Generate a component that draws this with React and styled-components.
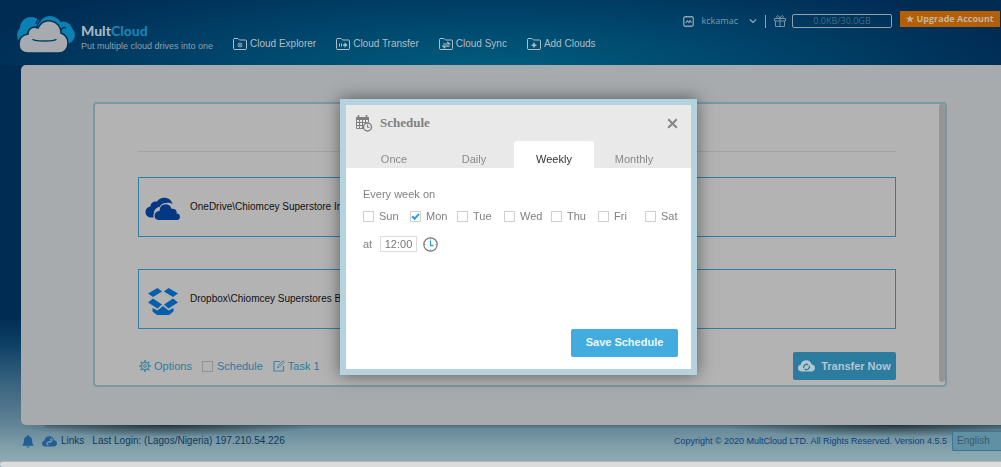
import React, { useState } from "react";
import styled, { createGlobalStyle, css } from "styled-components";

const sans = '"Liberation Sans", Arial, sans-serif';
const humanist = '"Open Sans", "Noto Sans", sans-serif';

const GlobalStyle = createGlobalStyle`
  *, *::before, *::after { box-sizing: border-box; }
  html { overflow: hidden; }
  body { margin: 0; font-family: ${sans}; font-size: 11px; line-height: 14px; }
  button, input, select { font: inherit; margin: 0; }
  a { text-decoration: none; color: inherit; }
  svg { display: block; flex: none; }
`;

const Page = styled.div`
  min-height: 100vh;
  display: flex;
  flex-direction: column;
  overflow: hidden;
  background:
    radial-gradient(ellipse 540px 110px at 49% 75px, #00607f 0%, rgba(0, 82, 120, 0.75) 45%, rgba(0, 43, 83, 0) 100%) no-repeat 0 0 / 100% 65px,
    linear-gradient(#002c54 0, #002c54 68%, #0f4166 74%, #345f7c 81%, #5d8093 90%, #88a6ae 97%, #8eacb3 100%);
`;

const Header = styled.header`
  display: flex;
  align-items: flex-start;
  height: 65px;
  padding: 0 1px 0 17px;
`;

const Brand = styled.a`
  display: flex;
  gap: 5px;
  width: 216px;
  padding-top: 15px;
`;

const BrandText = styled.span`
  display: flex;
  flex-direction: column;
  padding-top: 8px;
  white-space: nowrap;
`;

const BrandName = styled.strong`
  font: 900 14px/16px Lato, sans-serif;
  color: #a9b5bd;
  span { color: #1b83b0; }
`;

const Tagline = styled.span`
  font-size: 9px;
  line-height: 14px;
  color: #8fa0ad;
`;

const Nav = styled.nav`
  display: flex;
  gap: 20px;
  padding-top: 37px;
`;

const NavLink = styled.a`
  display: flex;
  align-items: center;
  gap: 3px;
  font-size: 10px;
  line-height: 14px;
  color: #b3bcc1;
  white-space: nowrap;
`;

const Account = styled.div`
  display: flex;
  align-items: center;
  height: 31px;
  margin-left: auto;
  padding-top: 11px;
  font-family: ${humanist};
  font-size: 9px;
  color: #7f9aab;
`;

const UserButton = styled.button`
  display: flex;
  align-items: center;
  gap: 8px;
  height: 13px;
  padding: 0 8px 0 0;
  border: 0;
  border-right: 1px solid #8ea1ad;
  background: none;
  color: inherit;
  span { padding-right: 3px; }
`;

const GiftLink = styled.a`
  padding: 0 6px 0 8px;
`;

const Storage = styled.div`
  width: 100px;
  height: 14px;
  margin-right: 8px;
  border: 1px solid #8ea1ad;
  border-radius: 2px;
  line-height: 12px;
  text-align: center;
  color: #426a80;
`;

const Upgrade = styled.button`
  align-self: flex-start;
  width: 100px;
  height: 16px;
  padding: 0;
  border: 0;
  background: #b45f03;
  color: #c3b4a2;
  font-weight: 700;
  line-height: 16px;
  white-space: nowrap;
`;

const Card = styled.main`
  flex: 1;
  display: flex;
  margin-left: 21px;
  padding: 37px 54px 38px 72px;
  border-radius: 5px 0 0 5px;
  background: #a7abae;
`;

const Task = styled.section`
  flex: 1;
  display: flex;
  border: 2px solid #7a97a2;
  border-radius: 4px;
  background: #b3b3b3;
`;

const TaskBody = styled.div`
  flex: 1;
  min-width: 0;
  padding: 47px 43px 5px;
  display: flex;
  flex-direction: column;
`;

const Track = styled.div`
  width: 6px;
  margin-bottom: 3px;
  border-radius: 3px;
  background: #959595;
`;

const Rule = styled.hr`
  width: 100%;
  margin: 0 0 25px;
  border: 0;
  border-top: 1px solid #a3a3a3;
`;

const Drive = styled.div`
  display: flex;
  align-items: center;
  height: 60px;
  margin-bottom: ${(p) => (p.$last ? 23 : 32)}px;
  padding-left: 5px;
  border: 1px solid #2f7fa2;
  font-size: 10px;
  color: #111;
`;

const DriveIcon = styled.span`
  display: flex;
  justify-content: center;
  width: 38px;
  margin-right: 8px;
  padding-top: 4px;
`;

const Tools = styled.div`
  display: flex;
  align-items: center;
  height: 28px;
  padding-left: 1px;
  color: #2b7c9f;
`;

const Tool = styled.a`
  display: flex;
  align-items: center;
  gap: 3px;
  margin-right: 10px;
`;

const ToolCheck = styled.label`
  display: flex;
  align-items: center;
  gap: 4px;
  margin-right: 10px;
`;

const Check = styled.input`
  appearance: none;
  width: 11px;
  height: 11px;
  flex: none;
  border: 1px solid ${(p) => (p.$dim ? "#929292" : "#d0d0d0")};
  background: ${(p) => (p.$dim ? "none" : "#fff")};
  &:checked {
    background: #fff
      url("data:image/svg+xml,%3Csvg xmlns='http://www.w3.org/2000/svg' viewBox='0 0 9 9'%3E%3Cpath d='M1.2 4.2L3.6 6.8L8 1.8' fill='none' stroke='%23259fdb' stroke-width='2'/%3E%3C/svg%3E")
      center / 9px 9px no-repeat;
  }
`;

const filled = css`
  border: 0;
  border-radius: 2px;
  font-weight: 700;
  height: 28px;
  white-space: nowrap;
`;

const Transfer = styled.button`
  ${filled}
  display: flex;
  align-items: center;
  justify-content: center;
  gap: 6px;
  width: 103px;
  margin-left: auto;
  padding: 0;
  background: #2c7c9f;
  color: #b4c6ce;
`;

const Footer = styled.footer`
  display: flex;
  align-items: center;
  height: 36px;
  padding: 0 0 4px 22px;
  font-size: 10px;
  color: #12395c;
  background:
    radial-gradient(ellipse 150px 12px at 165px 0, rgba(20, 35, 40, 0.75), rgba(20, 35, 40, 0)) no-repeat,
    radial-gradient(ellipse 170px 12px at calc(100% - 110px) 0, rgba(20, 35, 40, 0.75), rgba(20, 35, 40, 0)) no-repeat,
    linear-gradient(rgba(30, 50, 60, 0.3), rgba(30, 50, 60, 0) 4px) no-repeat 45px 0;
`;

const FooterLink = styled.a`
  display: flex;
  align-items: center;
  gap: 4px;
  margin-right: 8px;
`;

const Copyright = styled.span`
  margin-left: auto;
  margin-right: 5px;
  font-size: 9px;
  color: #0e427c;
`;

const Language = styled.select`
  appearance: none;
  width: 49px;
  height: 20px;
  padding: 0 0 0 4px;
  border: 1px solid #3b7595;
  border-right: 0;
  border-radius: 2px 0 0 2px;
  background: #5f90a3;
  color: #40596a;
`;

const BottomBar = styled.div`
  height: 6px;
  border-top: 1px solid #b9b4b4;
  border-radius: 3px 0 0 3px;
  background: #dcdcdc;
`;

const Overlay = styled.div`
  position: fixed;
  inset: 0;
  display: flex;
  justify-content: center;
  align-items: flex-start;
  padding: 99px 0 0 36px;
`;

const Dialog = styled.form`
  display: flex;
  flex-direction: column;
  width: 357px;
  height: 276px;
  border: 6px solid #b5d2df;
  background: #fff;
  color: #808080;
  box-shadow: 0 0 16px rgba(0, 0, 0, 0.5);
`;

const DialogHead = styled.div`
  display: flex;
  align-items: center;
  gap: 7px;
  height: 36px;
  padding: 0 13px 0 9px;
  background: #e9e9e9;
`;

const Title = styled.h2`
  margin: 0;
  font: 700 13px/16px "Liberation Serif", serif;
  color: #808080;
`;

const Close = styled.button`
  margin-left: auto;
  padding: 0;
  border: 0;
  background: none;
  color: #858585;
`;

const Tabs = styled.div`
  display: flex;
  height: 27px;
  padding-left: 8px;
  background: #e9e9e9;
`;

const Tab = styled.button`
  width: 80px;
  padding: 9px 0 0;
  border: 0;
  border-radius: 3px 3px 0 0;
  background: ${(p) => (p.$active ? "#fff" : "transparent")};
  color: ${(p) => (p.$active ? "#333" : "#8a8a8a")};
`;

const DialogBody = styled.div`
  flex: 1;
  display: flex;
  flex-direction: column;
  padding: 19px 0 12px 17px;
`;

const Days = styled.fieldset`
  margin: 0;
  padding: 0;
  border: 0;
  legend { padding: 0; margin-bottom: 8px; }
`;

const DayList = styled.div`
  display: grid;
  grid-template-columns: repeat(7, 47px);
`;

const Day = styled.label`
  display: flex;
  align-items: center;
  gap: 5px;
`;

const TimeRow = styled.div`
  display: flex;
  align-items: center;
  margin-top: 13px;
  label { width: 17px; }
  input {
    width: 37px;
    height: 16px;
    padding: 0;
    margin-right: 6px;
    border: 1px solid #dcdcdc;
    text-align: center;
    color: #777;
    background: #fff;
  }
`;

const Save = styled.button`
  ${filled}
  width: 107px;
  margin: auto 13px 0 auto;
  padding: 0 0 2px;
  background: #41acdd;
  color: #eef8fd;
`;

const BrandIcon = () => (
  <svg width="59" height="39" viewBox="0 0 59 39">
    <g fill="#0b80b2">
      <circle cx="14" cy="13" r="11" />
      <circle cx="10" cy="20" r="10" />
      <circle cx="33" cy="13" r="12" />
      <circle cx="46" cy="16" r="9.5" />
      <circle cx="49" cy="20" r="9" />
    </g>
    <path d="M20 12c0-3 2-5 4-7M24 3c-3 1-5 4-5 6M44 15c1-2 3-3 5-2" fill="none" stroke="#062f56" strokeWidth="1.300" />
    <path d="M11 38C5 38 2 34 2 29c0-5 3-9 9-10 0-5 4-8 10-6 3-6 8-8 13-7 6 1 10 6 10 12 5 2 7 6 7 10 0 6-4 10-9 10Z" fill="#a7abb0" stroke="#062f56" strokeWidth="1.5" />
    <path d="M16 24.500c2 2 21 2 23 0" fill="none" stroke="#063c64" strokeWidth="1.3" strokeLinecap="round" />
  </svg>
);

const glyphs = {
  explore: (
    <g>
      <path d="M7 4.500v5M4.500 7h5M5.200 5.200l3.600 3.600M8.800 5.200L5.200 8.800" stroke="currentColor" strokeWidth="1" />
      <circle cx="7" cy="7" r="0.800" fill="#005078" />
    </g>
  ),
  transfer: <path d="M3 5.500h1v3H3zM5 5.500h1v3H5zM7 6.200h1.500V4.200L11.500 7 8.500 9.800V7.800H7z" fill="currentColor" />,
  sync: <path d="M4 6h6.500L8.300 4M10.500 8.200H4l2.200 2" fill="none" stroke="currentColor" strokeWidth="1.200" />,
  add: <path d="M7 4.800v4.800M4.600 7.200h4.800" stroke="currentColor" strokeWidth="1.600" />,
};

const FolderIcon = ({ kind }) => (
  <svg width="14" height="12" viewBox="0 0 14 12">
    <path d="M.5 10.500v-9l.5-1h4l1.500 1.500h6.500l.5.500v8l-.5 1H1z" fill="none" stroke="currentColor" strokeWidth="1" />
    {glyphs[kind]}
  </svg>
);

const AvatarIcon = () => (
  <svg width="11" height="11" viewBox="0 0 11 11" fill="none" stroke="#8ea1ad">
    <rect x=".75" y=".75" width="9.500" height="9.500" rx="1.500" strokeWidth="1.300" />
    <path d="M2.500 6.800l2-2 1.500 1.700 1-2 1.500 2.300" strokeWidth="1.100" />
  </svg>
);

const ChevronIcon = () => (
  <svg width="8" height="6" viewBox="0 0 8 6">
    <path d="M.8 1.300L4 4.500l3.200-3.200" fill="none" stroke="#9fb0ba" strokeWidth="1.200" />
  </svg>
);

const GiftIcon = () => (
  <svg width="12" height="12" viewBox="0 0 12 12" fill="none" stroke="#7992a2" strokeWidth="1">
    <path d="M.5 3.500h11v2.500H.5zM1.500 6v5.500h9V6M6 3.500v8M6 3.500C5 .5 3 0 2.700 1.500 2.500 3 4 3.500 6 3.500c2 0 3.500-.5 3.300-2C9 0 7 .5 6 3.500" />
  </svg>
);

const OneDriveIcon = () => (
  <svg width="36" height="24" viewBox="0 0 36 24" fill="#053883">
    <path d="M9 20.500H6.500C2.500 20.500.5 18 .5 15c0-3.200 2.200-5 5-5.500C5.500 6 8.500 4 12 4.500 14 1.500 17 .5 20 .8c4 .4 6.800 3 7.500 6.200-3-2-8.500-2.200-11.500 2.800-4.500.2-7 3-7 6.200 0 1.500-.5 3 0 4.500Z" />
    <path d="M13.500 23.500C10.500 23.500 9 21 9 18.500s2-5 5-5.200c.3-3.800 3-6.600 6.500-6.600 3 0 5.500 1.800 6.500 4.500 3.500-.3 5.500 2 5.300 4.800 2 .3 3.200 2 3.200 3.700 0 2-1.300 3.800-3.500 3.800Z" stroke="#b3b3b3" strokeWidth="1.200" />
  </svg>
);

const DropboxIcon = () => (
  <svg width="30" height="27" viewBox="0 0 30 27" fill="#045eac">
    <path d="M9.500 0L14 3.500 5 9 0 5.500zM20.500 0L30 5.500 25 9l-9-5.500zM0 14.500L5 10.500l9 6L9.500 20.500zM30 14.500L25 10.500l-9 6 4.500 4zM15 18l5.500 4.500 5-2.500v3.500L21 27H9l-4.500-3.500V20l5 2.500z" />
  </svg>
);

const GearIcon = () => (
  <svg width="12" height="12" viewBox="0 0 12 12" fill="none" stroke="#4286a4">
    <circle cx="6" cy="6" r="3.600" strokeWidth="1.200" />
    <circle cx="6" cy="6" r="1.400" strokeWidth="1" />
    <path d="M6 0v2.200M6 9.800V12M0 6h2.200M9.800 6H12M1.800 1.800l1.500 1.500M8.700 8.700l1.500 1.500M1.800 10.200l1.500-1.500M8.700 3.300l1.500-1.500" strokeWidth="1.600" />
  </svg>
);

const EditIcon = () => (
  <svg width="12" height="12" viewBox="0 0 12 12" fill="none" stroke="#4286a4">
    <path d="M7 1.500H1v9.500h9.500V6" strokeWidth="1.200" />
    <path d="M4.500 7.800l.5-2L10 .8l1.300 1.300-5 5z" strokeWidth="1" />
  </svg>
);

const CloudSyncIcon = () => (
  <svg width="17" height="12" viewBox="0 0 17 12">
    <path d="M4 11.500C1.500 11.500 0 10 0 8c0-1.800 1.300-3 2.800-3.200C3 2 5.300.2 8.300.2c2.900 0 4.900 1.800 5.300 4.300 2 .2 3.400 1.600 3.400 3.500s-1.500 3.500-3.600 3.500Z" fill="#b5c8d0" />
    <path d="M5.800 8.300a2.900 2.900 0 0 1 4.400-3.400M11.200 5.700a2.900 2.900 0 0 1-4.400 3.400" fill="none" stroke="#2c7c9f" strokeWidth="1.300" />
  </svg>
);

const BellIcon = () => (
  <svg width="12" height="13" viewBox="0 0 12 13" fill="#215e94">
    <path d="M6 0c.7 0 1 .5 1 1.200C9.200 1.800 10 3.500 10 5.500c0 2.500.7 3.500 1.500 4.500v.8H.5V10C1.300 9 2 8 2 5.500c0-2 .8-3.700 3-4.300C5 .5 5.300 0 6 0M4.500 11.500h3C7.300 13 4.700 13 4.500 11.500" />
  </svg>
);

const CloudLinkIcon = () => (
  <svg width="15" height="11" viewBox="0 0 15 11">
    <path d="M3.500 10.500C1.300 10.500 0 9.200 0 7.500 0 5.800 1.200 4.800 2.500 4.600 2.700 2 4.700.3 7.300.3c2.500 0 4.300 1.600 4.700 3.900 1.800.2 3 1.500 3 3.100 0 1.800-1.300 3.200-3.200 3.200Z" fill="#215e94" />
    <path d="M7 6.800L9 4.500M6.700 5.200L5 7.300c-.5 1 .7 1.800 1.500 1M8 3.700l.8-.7c1-.7 2 .4 1.300 1.300L8.500 6.500" fill="none" stroke="#7d9ca8" strokeWidth="1.100" />
  </svg>
);

const CalendarIcon = () => (
  <svg width="18" height="17" viewBox="0 0 18 17">
    <path d="M1 2h13v3H1z" fill="#808080" />
    <path d="M3.500 0v3M11.500 0v3" stroke="#808080" strokeWidth="1.600" />
    <path d="M1.500 4v9.500H8M13.500 4v3M1.500 7.500H12M1.500 10.500H9M4.500 5v8M7.500 5v8M10.500 5v3" fill="none" stroke="#808080" strokeWidth="1" />
    <circle cx="12.500" cy="12" r="4" fill="#e9e9e9" stroke="#808080" strokeWidth="1.400" />
    <path d="M12.500 9.500v2.800h2" fill="none" stroke="#808080" strokeWidth="1.100" />
  </svg>
);

const CloseIcon = () => (
  <svg width="11" height="11" viewBox="0 0 11 11">
    <path d="M1.200 1.200l8.600 8.600M9.800 1.200L1.200 9.800" stroke="currentColor" strokeWidth="2" />
  </svg>
);

const ClockIcon = () => (
  <svg width="15" height="15" viewBox="0 0 15 15" fill="none">
    <circle cx="7.500" cy="7.500" r="6.700" stroke="#7c7c7c" strokeWidth="1.200" />
    <path d="M7.500 1v1.500M7.500 12.500V14M1 7.500h1.500M12.500 7.500H14" stroke="#8a8a8a" />
    <path d="M7.500 3.500v5h3" stroke="#2da3dc" strokeWidth="1.300" />
  </svg>
);

const NAV = [
  ["explore", "Cloud Explorer"],
  ["transfer", "Cloud Transfer"],
  ["sync", "Cloud Sync"],
  ["add", "Add Clouds"],
];
const TABS = ["Once", "Daily", "Weekly", "Monthly"];
const DAYS = ["Sun", "Mon", "Tue", "Wed", "Thu", "Fri", "Sat"];

export default function App() {
  const [tab, setTab] = useState("Weekly");

  return (
    <>
      <GlobalStyle />
      <Page>
        <Header>
          <Brand href="#">
            <BrandIcon />
            <BrandText>
              <BrandName>Mult<span>Cloud</span></BrandName>
              <Tagline>Put multiple cloud drives into one</Tagline>
            </BrandText>
          </Brand>
          <Nav>
            {NAV.map(([kind, label]) => (
              <NavLink href="#" key={kind}>
                <FolderIcon kind={kind} />
                {label}
              </NavLink>
            ))}
          </Nav>
          <Account>
            <UserButton type="button">
              <AvatarIcon />
              <span>kckamac</span>
              <ChevronIcon />
            </UserButton>
            <GiftLink href="#" aria-label="Gifts"><GiftIcon /></GiftLink>
            <Storage>0.0KB/30.0GB</Storage>
            <Upgrade type="button">★ Upgrade Account</Upgrade>
          </Account>
        </Header>

        <Card>
          <Task>
            <TaskBody>
              <Rule />
              <Drive>
                <DriveIcon><OneDriveIcon /></DriveIcon>
                OneDrive\Chiomcey Superstore Int
              </Drive>
              <Drive $last>
                <DriveIcon><DropboxIcon /></DriveIcon>
                Dropbox\Chiomcey Superstores Ba
              </Drive>
              <Tools>
                <Tool href="#"><GearIcon />Options</Tool>
                <ToolCheck><Check type="checkbox" $dim />Schedule</ToolCheck>
                <Tool href="#"><EditIcon />Task 1</Tool>
                <Transfer type="button"><CloudSyncIcon />Transfer Now</Transfer>
              </Tools>
            </TaskBody>
            <Track />
          </Task>
        </Card>

        <Footer>
          <FooterLink href="#" aria-label="Notifications"><BellIcon /></FooterLink>
          <FooterLink href="#"><CloudLinkIcon />Links</FooterLink>
          <span>Last Login: (Lagos/Nigeria) 197.210.54.226</span>
          <Copyright>Copyright © 2020 MultCloud LTD. All Rights Reserved. Version 4.5.5</Copyright>
          <Language aria-label="Language"><option>English</option></Language>
        </Footer>
        <BottomBar />
      </Page>

      <Overlay>
        <Dialog role="dialog" aria-labelledby="schedule-title" onSubmit={(e) => e.preventDefault()}>
          <DialogHead>
            <CalendarIcon />
            <Title id="schedule-title">Schedule</Title>
            <Close type="button" aria-label="Close"><CloseIcon /></Close>
          </DialogHead>
          <Tabs role="tablist">
            {TABS.map((name) => (
              <Tab type="button" role="tab" key={name} aria-selected={tab === name} $active={tab === name} onClick={() => setTab(name)}>
                {name}
              </Tab>
            ))}
          </Tabs>
          <DialogBody>
            <Days>
              <legend>Every week on</legend>
              <DayList>
                {DAYS.map((day) => (
                  <Day key={day}>
                    <Check type="checkbox" defaultChecked={day === "Mon"} />
                    {day}
                  </Day>
                ))}
              </DayList>
            </Days>
            <TimeRow>
              <label htmlFor="time">at</label>
              <input id="time" type="text" defaultValue="12:00" />
              <ClockIcon />
            </TimeRow>
            <Save type="submit">Save Schedule</Save>
          </DialogBody>
        </Dialog>
      </Overlay>
    </>
  );
}
